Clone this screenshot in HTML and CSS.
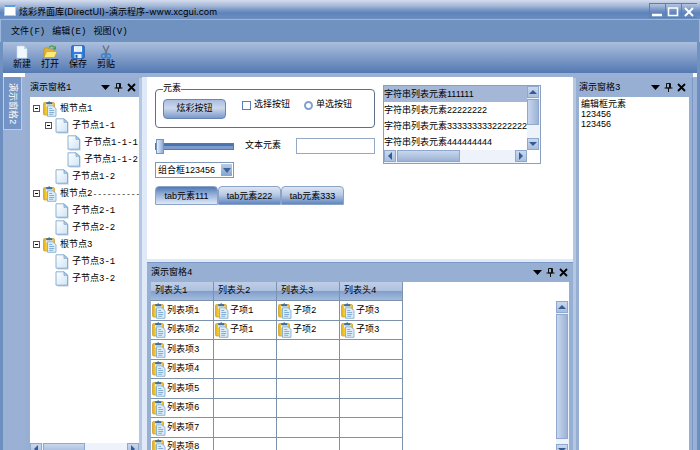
FILE: index.html
```html
<!DOCTYPE html>
<html lang="zh-CN">
<head>
    <meta charset="UTF-8">
    <meta name="viewport" content="width=device-width, initial-scale=1.0">
    <title>炫彩界面库(DirectUI)-演示程序</title>
    <link rel="stylesheet" href="styles.css">
</head>
<body>
    <!-- 图标 -->
    <svg class="defs" aria-hidden="true">
        <defs>
            <linearGradient id="paper" x1="0" y1="0" x2="1" y2="1">
                <stop offset="0" stop-color="#fff"/>
                <stop offset="1" stop-color="#cfe4f6"/>
            </linearGradient>
            <linearGradient id="gold" x1="0" y1="0" x2="1" y2="0">
                <stop offset="0" stop-color="#e0ad22"/>
                <stop offset="0.4" stop-color="#fddc4a"/>
                <stop offset="1" stop-color="#ecbc2a"/>
            </linearGradient>
        </defs>
        <symbol id="doc" viewBox="0 0 14 16">
            <path d="M2.500 2h8.500l2.500 3v10.500h-11z" fill="#8fa3b8" opacity=".55"/>
            <path d="M1 .8h8l3.500 3.500V14.200H1z" fill="url(#paper)" stroke="#7fa8cf" stroke-width=".9"/>
            <path d="M9 .8v3.500h3.500z" fill="#b9d6ef" stroke="#6c9cc8" stroke-width=".7"/>
        </symbol>
        <symbol id="clip" viewBox="0 0 14 16">
            <rect x=".5" y="1.500" width="11" height="12.500" rx="1.200" fill="url(#gold)" stroke="#c99a22" stroke-width=".7"/>
            <rect x="3" y="2.500" width="6.500" height="3" fill="#eef3f8"/>
            <path d="M3.500 3V1.600h1.500Q6.200-.4 7.500 1.600H9V3z" fill="#3f79a8" stroke="#2d5f8c" stroke-width=".5"/>
            <path d="M4.500 4.800h5.500l3 2.700v7.800H4.500z" fill="#dcecf8" stroke="#7aa7cc" stroke-width=".8"/>
            <path d="M6.200 7.500h3M6.200 9.500h5M6.200 11.500h5M6.200 13.300h4" stroke="#6d9fca" stroke-width=".8"/>
        </symbol>
        <symbol id="pin" viewBox="0 0 9 9">
            <path d="M2.500.5h4v4.500h-4zM5.500.5v4.500M.5 5h8M4.500 5v4" fill="none" stroke="#111" stroke-width="1"/>
        </symbol>
        <symbol id="cross" viewBox="0 0 9 9">
            <path d="M1 1l7 7M8 1l-7 7" stroke="#000" stroke-width="1.800"/>
        </symbol>
        <symbol id="down" viewBox="0 0 9 9">
            <path d="M0 2h9L4.500 7z"/>
        </symbol>
    </svg>

    <div class="window">
        <header class="titlebar">
            <span class="app-icon"></span>
            <h1>炫彩界面库(DirectUI)-演示程序-www.xcgui.com</h1>
            <div class="win-buttons">
                <button aria-label="最小化"><svg viewBox="0 0 14 14"><path d="M2 11h10" stroke="#fff" stroke-width="2.500"/></svg></button>
                <button aria-label="最大化"><svg viewBox="0 0 14 14"><path d="M2.500 4h9v7.500h-9z" fill="none" stroke="#fff" stroke-width="1.600"/></svg></button>
                <button aria-label="关闭"><svg viewBox="0 0 14 14"><path d="M3 4l8 8M11 4l-8 8" stroke="#fff" stroke-width="1.900"/></svg></button>
            </div>
        </header>

        <nav class="menu">
            <button>文件(F)</button>
            <button>编辑(E)</button>
            <button>视图(V)</button>
        </nav>

        <div class="toolbar">
            <button>
                <svg viewBox="0 0 14 14"><path d="M2 1h7l3 3v9H2z" fill="#f2f7fd" stroke="#c3d8ee" stroke-width=".6"/><path d="M9 1v3h3z" fill="#b9d3ec"/></svg>
                新建
            </button>
            <button>
                <svg viewBox="0 0 14 14"><path d="M1 12.500V4l1-1h3l1 1h5v8.500z" fill="#e3b52d" stroke="#a8801c" stroke-width=".5"/><path d="M1 12.500l2.500-6H14l-2.500 6z" fill="#fde878" stroke="#b98f22" stroke-width=".5"/><path d="M6 2.500Q9-.5 11.500 2.200" fill="none" stroke="#3ba536" stroke-width="1.400"/><path d="M13 .8v3.700H9.500z" fill="#3ba536"/></svg>
                打开
            </button>
            <button>
                <svg viewBox="0 0 14 14"><rect x=".7" y=".7" width="12.600" height="12.600" rx="1" fill="#2f7fe0" stroke="#1b56ac" stroke-width=".8"/><rect x="3" y="1.200" width="8" height="5.600" fill="#fff"/><path d="M4 3h6M4 5h6" stroke="#b9d0ea" stroke-width=".8"/><rect x="3.500" y="9" width="7" height="4" fill="#e7f0fa"/><rect x="4.500" y="9.800" width="2" height="3" fill="#1b56ac"/></svg>
                保存
            </button>
            <button>
                <svg viewBox="0 0 14 14"><path d="M4 .5l4 8.500M10 .5L6 9" stroke="#6b7684" stroke-width="1.500"/><circle cx="4.500" cy="11" r="2" fill="none" stroke="#3b82cf" stroke-width="1.400"/><circle cx="9.500" cy="11" r="2" fill="none" stroke="#3b82cf" stroke-width="1.400"/></svg>
                剪贴
            </button>
        </div>

        <main class="work">
            <aside class="dock">
                <button class="dock-tab">演示窗格2</button>
            </aside>

            <section class="pane pane-tree">
                <div class="pane-head">
                    <h2>演示窗格1</h2>
                    <button aria-label="菜单"><svg><use href="#down"/></svg></button>
                    <button aria-label="固定"><svg><use href="#pin"/></svg></button>
                    <button aria-label="关闭"><svg><use href="#cross"/></svg></button>
                </div>
                <div class="pane-body">
                    <ul class="tree">
                        <li>
                            <div class="node"><i class="toggle"></i><svg><use href="#clip"/></svg>根节点1</div>
                            <ul>
                                <li>
                                    <div class="node"><i class="toggle"></i><svg><use href="#doc"/></svg>子节点1-1</div>
                                    <ul>
                                        <li><div class="node leaf"><svg><use href="#doc"/></svg>子节点1-1-1</div></li>
                                        <li><div class="node leaf"><svg><use href="#doc"/></svg>子节点1-1-2</div></li>
                                    </ul>
                                </li>
                                <li><div class="node leaf"><svg><use href="#doc"/></svg>子节点1-2</div></li>
                            </ul>
                        </li>
                        <li>
                            <div class="node"><i class="toggle"></i><svg><use href="#clip"/></svg><span>根节点2<small>----------</small></span></div>
                            <ul>
                                <li><div class="node leaf"><svg><use href="#doc"/></svg>子节点2-1</div></li>
                                <li><div class="node leaf"><svg><use href="#doc"/></svg>子节点2-2</div></li>
                            </ul>
                        </li>
                        <li>
                            <div class="node"><i class="toggle"></i><svg><use href="#clip"/></svg>根节点3</div>
                            <ul>
                                <li><div class="node leaf"><svg><use href="#doc"/></svg>子节点3-1</div></li>
                                <li><div class="node leaf"><svg><use href="#doc"/></svg>子节点3-2</div></li>
                            </ul>
                        </li>
                    </ul>
                    <div class="scroll-h">
                        <button class="left" aria-label="向左"></button>
                        <div class="track"><div class="thumb"></div></div>
                        <button class="right" aria-label="向右"></button>
                    </div>
                </div>
            </section>

            <div class="center">
                <section class="demo">
                    <div class="demo-left">
                        <fieldset>
                            <legend>元素</legend>
                            <button class="push">炫彩按钮</button>
                            <label class="check"><input type="checkbox">选择按钮</label>
                            <label class="check"><input type="radio" name="opt">单选按钮</label>
                        </fieldset>
                        <div class="row">
                            <input type="range" min="0" max="100" value="0" aria-label="滑块">
                            <label for="edit">文本元素</label>
                            <input type="text" id="edit">
                        </div>
                        <div class="combo">
                            <select aria-label="组合框">
                                <option>组合框123456</option>
                            </select>
                            <span class="combo-arrow"></span>
                        </div>
                        <div class="tabs">
                            <button class="active">tab元素111</button>
                            <button>tab元素222</button>
                            <button>tab元素333</button>
                        </div>
                    </div>
                    <div class="listbox">
                        <ul>
                            <li class="selected">字符串列表元素111111</li>
                            <li>字符串列表元素22222222</li>
                            <li>字符串列表元素3333333332222222</li>
                            <li>字符串列表元素444444444</li>
                        </ul>
                        <div class="scroll-v">
                            <button class="up" aria-label="向上"></button>
                            <div class="track"><div class="thumb"></div></div>
                            <button class="dn" aria-label="向下"></button>
                        </div>
                        <div class="scroll-h">
                            <button class="left" aria-label="向左"></button>
                            <div class="track"><div class="thumb"></div></div>
                            <button class="right" aria-label="向右"></button>
                        </div>
                    </div>
                </section>

                <section class="pane pane-grid">
                    <div class="pane-head">
                        <h2>演示窗格4</h2>
                        <button aria-label="菜单"><svg><use href="#down"/></svg></button>
                        <button aria-label="固定"><svg><use href="#pin"/></svg></button>
                        <button aria-label="关闭"><svg><use href="#cross"/></svg></button>
                    </div>
                    <div class="pane-body">
                        <div class="table-wrap">
                            <table>
                                <thead>
                                    <tr><th>列表头1</th><th>列表头2</th><th>列表头3</th><th>列表头4</th></tr>
                                </thead>
                                <tbody>
                                    <tr>
                                        <td><div class="cell"><svg><use href="#clip"/></svg>列表项1</div></td>
                                        <td><div class="cell"><svg><use href="#clip"/></svg>子项1</div></td>
                                        <td><div class="cell"><svg><use href="#clip"/></svg>子项2</div></td>
                                        <td><div class="cell"><svg><use href="#clip"/></svg>子项3</div></td>
                                    </tr>
                                    <tr>
                                        <td><div class="cell"><svg><use href="#clip"/></svg>列表项2</div></td>
                                        <td><div class="cell"><svg><use href="#clip"/></svg>子项1</div></td>
                                        <td><div class="cell"><svg><use href="#clip"/></svg>子项2</div></td>
                                        <td><div class="cell"><svg><use href="#clip"/></svg>子项3</div></td>
                                    </tr>
                                    <tr><td><div class="cell"><svg><use href="#clip"/></svg>列表项3</div></td><td></td><td></td><td></td></tr>
                                    <tr><td><div class="cell"><svg><use href="#clip"/></svg>列表项4</div></td><td></td><td></td><td></td></tr>
                                    <tr><td><div class="cell"><svg><use href="#clip"/></svg>列表项5</div></td><td></td><td></td><td></td></tr>
                                    <tr><td><div class="cell"><svg><use href="#clip"/></svg>列表项6</div></td><td></td><td></td><td></td></tr>
                                    <tr><td><div class="cell"><svg><use href="#clip"/></svg>列表项7</div></td><td></td><td></td><td></td></tr>
                                    <tr><td><div class="cell"><svg><use href="#clip"/></svg>列表项8</div></td><td></td><td></td><td></td></tr>
                                </tbody>
                            </table>
                        </div>
                        <div class="scroll-v">
                            <button class="up" aria-label="向上"></button>
                            <div class="track"><div class="thumb"></div></div>
                            <button class="dn" aria-label="向下"></button>
                        </div>
                    </div>
                </section>
            </div>

            <section class="pane pane-edit">
                <div class="pane-head">
                    <h2>演示窗格3</h2>
                    <button aria-label="菜单"><svg><use href="#down"/></svg></button>
                    <button aria-label="固定"><svg><use href="#pin"/></svg></button>
                    <button aria-label="关闭"><svg><use href="#cross"/></svg></button>
                </div>
                <div class="pane-body">
                    <textarea aria-label="编辑框">编辑框元素
123456
123456</textarea>
                </div>
            </section>
            <div class="edge"></div>
        </main>
    </div>
</body>
</html>
```
FILE: styles.css
```css
* {
    box-sizing: border-box;
}

body {
    margin: 0;
    height: 100vh;
    overflow: hidden;
    font-family: "Liberation Mono", "Noto Sans CJK SC", monospace;
    font-size: 9px;
    line-height: 12px;
    color: #000;
}

button, input, select, textarea {
    font: inherit;
    color: inherit;
    margin: 0;
    padding: 0;
    border: none;
    background: none;
}

h1, h2, ul {
    margin: 0;
    padding: 0;
    font-size: 9px;
    font-weight: normal;
    list-style: none;
}

.defs {
    position: absolute;
    width: 0;
    height: 0;
}

.window {
    display: flex;
    flex-direction: column;
    height: calc(100vh + 6px);
    background: #9ab1d5;
}

/* 标题栏 */
.titlebar {
    display: flex;
    align-items: flex-end;
    height: 20px;
    padding: 0 3px 1px 4px;
    background: linear-gradient(#d3dcec, #a3b7d8 6px, #7696c4 10px, #5e84bb 13px, #6c8fc0);
    border-bottom: 1px solid #9db7dc;
}

.titlebar h1 {
    flex: 1;
    padding-left: 3px;
    font-family: Inter, "Noto Sans CJK SC", sans-serif;
    line-height: 13px;
}

.app-icon {
    width: 12px;
    height: 11px;
    margin-bottom: 2px;
    background: #fff;
    border: 1px solid #a9d0f4;
    border-top: 2px solid #5f9de0;
}

.win-buttons {
    display: flex;
}

.win-buttons button {
    width: 16px;
    height: 15px;
    border: 1px solid #5c7fb3;
    border-right: none;
}

.win-buttons svg {
    display: block;
    width: 14px;
    height: 14px;
}

/* 菜单和工具条 */
.menu {
    display: flex;
    gap: 7px;
    height: 22px;
    padding: 1px 10px 0;
    background: #7092c1;
    border-left: 1px solid #9db7dc;
    border-right: 1px solid #9db7dc;
}

.toolbar {
    display: flex;
    height: 31px;
    padding-left: 5px;
    background: linear-gradient(#abbfde, #5479b2);
    border-left: 3px solid #7092c1;
    border-right: 3px solid #7092c1;
}

.toolbar button {
    display: flex;
    flex-direction: column;
    align-items: center;
    width: 28px;
    padding-top: 3px;
}

.toolbar svg {
    width: 14px;
    height: 14px;
}

/* 工作区 */
.work {
    display: flex;
    flex: 1;
    min-height: 0;
}

.dock {
    width: 25px;
    padding-top: 4px;
    border-left: 3px solid #6d8fc0;
    background: linear-gradient(#fff 4px, transparent 4px);
}

.dock-tab {
    width: 19px;
    height: 53px;
    padding-top: 6px;
    writing-mode: vertical-rl;
    text-orientation: sideways;
    text-align: left;
    line-height: 18px;
    color: #fff;
    background: #7394c4;
    border: 1px solid #b9cde9;
    border-top: none;
}

.pane {
    display: flex;
    flex-direction: column;
    background: #97afd3;
}

.pane-head {
    display: flex;
    align-items: center;
    gap: 4px;
    height: 19px;
    padding-right: 3px;
}

.pane-head h2 {
    flex: 1;
}

.pane-head button,
.pane-head svg {
    display: block;
    width: 9px;
    height: 9px;
}

.pane-body {
    flex: 1;
    display: flex;
    min-height: 0;
    background: #fff;
}

.pane-tree,
.pane-edit {
    flex: none;
    margin-top: 5px;
}

.pane-tree {
    width: 117px;
    padding-left: 5px;
    border-right: 3px solid #b4c7e3;
}

.pane-tree .pane-body {
    flex-direction: column;
    overflow: hidden;
}

.tree {
    flex: 1;
    padding: 3px 0 0 3px;
    white-space: nowrap;
}

.tree ul {
    padding-left: 12px;
}

.tree small {
    font-size: 8px;
}

.node {
    display: flex;
    align-items: center;
    gap: 3px;
    height: 17px;
}

.node.leaf {
    padding-left: 10px;
}

.node svg,
.cell svg {
    flex: none;
    width: 14px;
    height: 16px;
}

.toggle {
    display: flex;
    align-items: center;
    flex: none;
    width: 7px;
    height: 7px;
    padding: 0 1px;
    border: 1px solid #555;
}

.toggle::before {
    content: "";
    flex: 1;
    height: 1px;
    background: #000;
}

/* 中间区域 */
.center {
    flex: 1;
    min-width: 0;
    display: flex;
    flex-direction: column;
    margin-top: 4px;
    padding-left: 5px;
    background: #dfe9f7;
}

.demo {
    display: flex;
    align-items: flex-start;
    gap: 8px;
    height: 182px;
    padding: 7px 8px;
    background: #fff;
}

.demo-left {
    width: 220px;
}

fieldset {
    display: flex;
    align-items: flex-start;
    height: 44px;
    margin: 0;
    padding: 5px 7px 0;
    border: 1px solid #5f6f85;
    border-radius: 4px;
}

legend {
    height: 10px;
    padding: 0;
    line-height: 10px;
}

.push {
    width: 63px;
    height: 20px;
    margin-right: 16px;
    border: 1px solid #6786b5;
    border-radius: 4px;
    background: linear-gradient(#a9bddf, #ccd8ec 45%, #7b9aca);
}

.check {
    display: flex;
    align-items: center;
    gap: 3px;
    margin-right: 14px;
}

.check input {
    appearance: none;
    width: 9px;
    height: 9px;
    border: 1px solid #5a82ba;
    background: #fff;
}

.check input[type="radio"] {
    border-radius: 50%;
    border: 2px solid #7fa0d0;
}

.row {
    display: flex;
    align-items: center;
    height: 16px;
    margin-top: 10px;
}

.row label {
    flex: 1;
    padding-left: 11px;
}

.row input[type="text"] {
    width: 79px;
    height: 16px;
    padding: 0 2px;
    border: 1px solid #93a9c8;
}

input[type="range"] {
    appearance: none;
    width: 79px;
    height: 16px;
}

input[type="range"]::-webkit-slider-runnable-track {
    height: 7px;
    background: linear-gradient(#4d73ae 2px, #7b9ccd 2px);
    border: 1px solid #5577a9;
}

input[type="range"]::-webkit-slider-thumb {
    appearance: none;
    width: 8px;
    height: 15px;
    margin-top: -5px;
    border: 1px solid #7494c2;
    background: linear-gradient(to right, #e4edf9, #8daad4);
}

.combo {
    position: relative;
    width: 79px;
    height: 16px;
    margin-top: 8px;
}

.combo select {
    appearance: none;
    width: 100%;
    height: 16px;
    padding-left: 2px;
    line-height: 14px;
    border: 1px solid #8098b8;
}

.combo-arrow {
    position: absolute;
    top: 2px;
    right: 2px;
    width: 11px;
    height: 12px;
    background: linear-gradient(#b9cbe6, #86a3d0);
    pointer-events: none;
}

.combo-arrow::before,
.up::before, .dn::before, .left::before, .right::before {
    content: "";
    display: block;
    width: 0;
    margin: auto;
    border: 4px solid transparent;
}

.combo-arrow::before {
    margin-top: 4px;
    border-width: 5px 4px 0;
    border-top-color: #3d639c;
}

.combo select,
.tabs button,
.listbox {
    font-family: "Liberation Sans", "Noto Sans CJK SC", sans-serif;
}

.tabs {
    display: flex;
    margin-top: 8px;
}

.tabs button {
    width: 63px;
    height: 19px;
    border: 1px solid #8ba3c9;
    border-radius: 4px 4px 0 0;
    background: linear-gradient(#dce5f3, #b9cae4 45%, #5f86bf);
}

.tabs .active {
    background: linear-gradient(#4f78b4, #8fabd6 40%, #dfe8f6);
}

/* 列表框 */
.listbox {
    display: grid;
    grid-template-columns: 1fr 13px;
    grid-template-rows: 1fr 13px;
    width: 158px;
    height: 79px;
    margin-top: 1px;
    border: 1px solid #8ba0bd;
}

.listbox ul {
    overflow: hidden;
    white-space: nowrap;
}

.listbox li {
    height: 16px;
    line-height: 16px;
}

.listbox .selected {
    background: #a5b7d7;
}

/* 滚动条 */
.scroll-h,
.scroll-v {
    display: flex;
    background: #eef2fa;
}

.scroll-v {
    flex-direction: column;
    width: 13px;
}

.scroll-h {
    height: 13px;
}

.scroll-h button,
.scroll-v button {
    flex: none;
    width: 12px;
    height: 12px;
    border: 1px solid #8fa8ce;
    background: linear-gradient(#c9d8ee, #a9bfdf);
}

.track {
    flex: 1;
    display: flex;
    padding: 0 1px;
}

.scroll-v .track {
    flex-direction: column;
    padding: 1px 0;
}

.thumb {
    width: 50%;
    height: 12px;
    border: 1px solid #8fa8ce;
    background: linear-gradient(#c8d7ed, #9cb2d6);
}

.scroll-v .thumb {
    width: 12px;
    height: 68%;
    background: linear-gradient(to right, #c8d7ed, #9cb2d6);
}

.listbox .scroll-h .thumb {
    width: 54%;
}

.up::before {
    border-width: 0 4px 4px;
    border-bottom-color: #365c96;
}

.dn::before {
    border-width: 4px 4px 0;
    border-top-color: #365c96;
}

.left::before {
    border-width: 4px 4px 4px 0;
    border-right-color: #365c96;
}

.right::before {
    border-width: 4px 0 4px 4px;
    border-left-color: #365c96;
}

/* 窗格4 */
.pane-grid {
    flex: 1;
    min-height: 0;
    margin-top: 3px;
    padding: 0 4px;
    border-top: 1px solid #7b99c8;
}

.pane-grid .pane-head {
    padding-right: 1px;
}

.pane-grid .pane-body {
    overflow: hidden;
    justify-content: space-between;
}

.pane-grid .scroll-v {
    margin: 19px 0 0;
}

.pane-grid .thumb {
    height: 97%;
}

table {
    width: 252px;
    table-layout: fixed;
    border-collapse: separate;
    border-spacing: 0;
}

th, td {
    height: 20px;
    padding: 0;
    border-right: 1px solid #7d93ad;
    border-bottom: 1px solid #7d93ad;
}

th {
    height: 19px;
    padding-left: 4px;
    font-weight: normal;
    text-align: left;
    background: linear-gradient(#bfcee6, #adc1df 48%, #7f9ecd 50%, #a5bbdd);
}

tbody tr:nth-child(even) td {
    height: 19px;
}

.cell {
    display: flex;
    align-items: center;
    gap: 1px;
    height: 16px;
    padding-left: 1px;
}

/* 窗格3 */
.pane-edit {
    width: 120px;
    padding: 0 3px;
    border-left: 3px solid #b4c7e3;
    border-right: 1px solid #7b99c8;
}

textarea {
    width: 100%;
    padding: 2px;
    resize: none;
    outline: none;
    font-family: "Liberation Sans", "Noto Sans CJK SC", sans-serif;
    line-height: 10px;
}

.edge {
    width: 7px;
    border-right: 3px solid #6d8fc0;
    background: linear-gradient(#fff 4px, transparent 4px);
}
```
